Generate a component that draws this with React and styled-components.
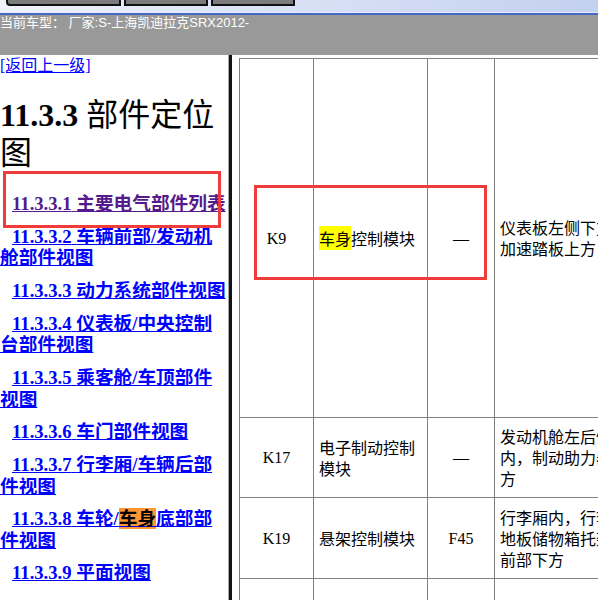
import React from "react";
import styled, { createGlobalStyle } from "styled-components";

const GlobalStyle = createGlobalStyle`
  html, body {
    margin: 0;
    padding: 0;
    background: #ffffff;
    overflow: hidden;
  }
  #root {
    width: 598px;
    height: 600px;
  }
`;

const Screen = styled.div`
  width: 598px;
  height: 600px;
  display: flex;
  flex-direction: column;
  overflow: hidden;
  background: #ffffff;
`;

/* ---------- top tab strip ---------- */

const TabStrip = styled.div`
  height: 12px;
  flex: none;
  display: flex;
  align-items: flex-start;
  gap: 3px;
  padding-left: 6px;
  background: linear-gradient(to right, #f0f3fa 0%, #dce4f6 40%, #c3d0ef 100%);
  border-bottom: 1px solid #e6ecf9;
`;

const Tab = styled.div`
  width: ${(p) => p.$w}px;
  height: 6px;
  box-sizing: border-box;
  background: #7c7c7c;
  border: 2px solid #111111;
  border-top: none;
  border-bottom-left-radius: ${(p) => (p.$first ? "4px" : "0")};
`;

/* ---------- current vehicle bar ---------- */

const InfoBar = styled.div`
  height: 40px;
  flex: none;
  background: #999999;
  border-top: 2px solid #4769c6;
  color: #ffffff;
  font-family: "Liberation Sans", "Noto Sans CJK SC", sans-serif;
  font-size: 13px;
  line-height: 16px;
  white-space: nowrap;
`;

/* ---------- two frames ---------- */

const Frames = styled.div`
  flex: 1;
  display: flex;
  min-height: 0;
`;

const NavPane = styled.div`
  position: relative;
  width: 229px;
  flex: none;
  box-sizing: border-box;
  border-right: 1px solid #a4a4a4;
  overflow: hidden;
  padding-top: 2px;
  font-family: "Liberation Serif", "Noto Sans CJK SC", serif;
  color: #000000;
`;

const Splitter = styled.div`
  width: 3px;
  flex: none;
  background: #141414;
`;

const ContentPane = styled.div`
  position: relative;
  flex: 1;
  overflow: hidden;
  padding: 3px 0 0 7px;
`;

/* ---------- navigation pane ---------- */

const BackLink = styled.a`
  display: block;
  font-size: 16px;
  line-height: 18px;
  color: #0000ff;
  text-decoration: underline;
  cursor: pointer;
`;

const Heading = styled.h1`
  margin: 21px 0 21px;
  font-size: 32px;
  line-height: 38px;
  font-weight: 700;
`;

const HeadingText = styled.span`
  font-weight: 400;
`;

const SectionList = styled.div`
  display: flex;
  flex-direction: column;
  gap: 11.1px;
`;

const SectionLink = styled.a`
  display: block;
  text-indent: 12px;
  font-size: 18.67px;
  line-height: 21.6px;
  font-weight: 700;
  color: ${(p) => (p.$visited ? "#551a8b" : "#0000ff")};
  text-decoration: underline;
  cursor: pointer;
`;

const Mark = styled.span`
  background: ${(p) => (p.$tone === "orange" ? "#ff9632" : "#ffff00")};
  color: #000000;
`;

/* red callout frames drawn over the content */
const Callout = styled.div`
  position: absolute;
  left: ${(p) => p.$x}px;
  top: ${(p) => p.$y}px;
  width: ${(p) => p.$w}px;
  height: ${(p) => p.$h}px;
  box-sizing: border-box;
  border: 3px solid #f03b3b;
  pointer-events: none;
`;

/* ---------- parts table ---------- */

const PartsTable = styled.table`
  border-collapse: collapse;
  table-layout: fixed;
  width: 520px;
`;

const Col = styled.col`
  width: ${(p) => p.$w}px;
`;

const Row = styled.tr`
  height: ${(p) => p.$h}px;
`;

const Cell = styled.td`
  border: 1px solid #808080;
  padding: 0 5px;
  vertical-align: middle;
  font-size: 16px;
  line-height: 21px;
  color: #000000;
  text-align: ${(p) => (p.$center ? "center" : "left")};
  font-family: ${(p) =>
    p.$serif
      ? '"Liberation Serif", "Noto Sans CJK SC", serif'
      : '"Noto Sans CJK SC", "Liberation Sans", sans-serif'};
`;

const sections = [
  { num: "11.3.3.1", title: "主要电气部件列表", visited: true },
  { num: "11.3.3.2", title: "车辆前部/发动机舱部件视图" },
  { num: "11.3.3.3", title: "动力系统部件视图" },
  { num: "11.3.3.4", title: "仪表板/中央控制台部件视图" },
  { num: "11.3.3.5", title: "乘客舱/车顶部件视图" },
  { num: "11.3.3.6", title: "车门部件视图" },
  { num: "11.3.3.7", title: "行李厢/车辆后部件视图" },
  {
    num: "11.3.3.8",
    title: (
      <>
        车轮/<Mark $tone="orange">车身</Mark>底部部件视图
      </>
    ),
  },
  { num: "11.3.3.9", title: "平面视图" },
];

const parts = [
  {
    code: "K9",
    name: (
      <>
        <Mark $tone="yellow">车身</Mark>控制模块
      </>
    ),
    fuse: "—",
    place: "仪表板左侧下方，加速踏板上方",
    height: 359,
  },
  {
    code: "K17",
    name: "电子制动控制模块",
    fuse: "—",
    place: "发动机舱左后侧板内，制动助力器下方",
    height: 80,
  },
  {
    code: "K19",
    name: "悬架控制模块",
    fuse: "F45",
    place: "行李厢内，行李厢地板储物箱托架的前部下方",
    height: 81,
  },
  { code: "", name: "", fuse: "", place: "", height: 60 },
];

export default function App() {
  return (
    <>
      <GlobalStyle />
      <Screen>
        <TabStrip>
          <Tab $w={115} $first />
          <Tab $w={84} />
          <Tab $w={84} />
        </TabStrip>
        <InfoBar>当前车型： 厂家:S-上海凯迪拉克SRX2012-</InfoBar>
        <Frames>
          <NavPane>
            <BackLink>[返回上一级]</BackLink>
            <Heading>
              11.3.3 <HeadingText>部件定位图</HeadingText>
            </Heading>
            <SectionList>
              {sections.map((s) => (
                <SectionLink key={s.num} $visited={s.visited}>
                  {s.num} {s.title}
                </SectionLink>
              ))}
            </SectionList>
            <Callout $x={3} $y={116} $w={218} $h={57} />
          </NavPane>
          <Splitter />
          <ContentPane>
            <PartsTable>
              <colgroup>
                <Col $w={74} />
                <Col $w={114} />
                <Col $w={67} />
                <Col $w={142} />
                <Col $w={123} />
              </colgroup>
              <tbody>
                {parts.map((p, i) => (
                  <Row key={i} $h={p.height}>
                    <Cell $center $serif>
                      {p.code}
                    </Cell>
                    <Cell>{p.name}</Cell>
                    <Cell $center $serif>
                      {p.fuse}
                    </Cell>
                    <Cell>{p.place}</Cell>
                    <Cell />
                  </Row>
                ))}
              </tbody>
            </PartsTable>
            <Callout $x={22} $y={130} $w={233} $h={95} />
          </ContentPane>
        </Frames>
      </Screen>
    </>
  );
}
